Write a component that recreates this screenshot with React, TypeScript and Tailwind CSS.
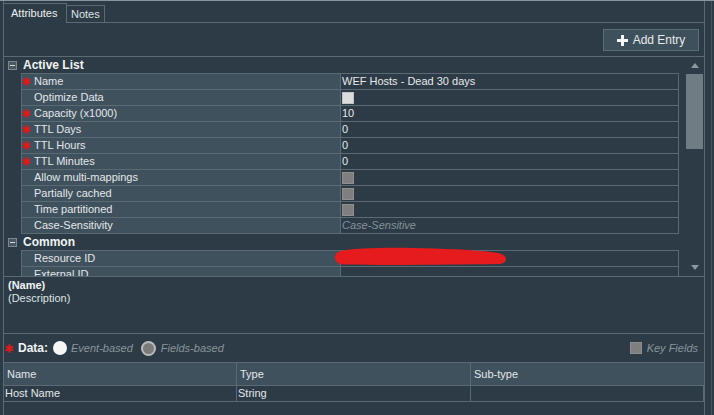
import React from 'react'

// Attribute editor panel: tabs, toolbar, property grid, description, data fields table

type Row = {
  label: string
  req?: boolean
  kind: 'text' | 'check-on' | 'check-off' | 'hint' | 'redacted' | 'empty'
  value?: string
}

const ACTIVE_LIST: Row[] = [
  { label: 'Name', req: true, kind: 'text', value: 'WEF Hosts - Dead 30 days' },
  { label: 'Optimize Data', kind: 'check-on' },
  { label: 'Capacity (x1000)', req: true, kind: 'text', value: '10' },
  { label: 'TTL Days', req: true, kind: 'text', value: '0' },
  { label: 'TTL Hours', req: true, kind: 'text', value: '0' },
  { label: 'TTL Minutes', req: true, kind: 'text', value: '0' },
  { label: 'Allow multi-mappings', kind: 'check-off' },
  { label: 'Partially cached', kind: 'check-off' },
  { label: 'Time partitioned', kind: 'check-off' },
  { label: 'Case-Sensitivity', kind: 'hint', value: 'Case-Sensitive' },
]

const COMMON: Row[] = [
  { label: 'Resource ID', kind: 'redacted' },
  { label: 'External ID', kind: 'empty' },
]

function Asterisk() {
  return (
    <svg width="9" height="9" viewBox="0 0 10 10" className="shrink-0">
      <g stroke="#e3191c" strokeWidth="2.3">
        <line x1="5" y1="0.3" x2="5" y2="9.7" />
        <line x1="0.9" y1="2.65" x2="9.1" y2="7.35" />
        <line x1="0.9" y1="7.35" x2="9.1" y2="2.65" />
      </g>
    </svg>
  )
}

function MinusBox() {
  return (
    <div className="w-[9px] h-[9px] border border-[#7d888e] bg-[#4a5961] flex items-center justify-center shrink-0">
      <div className="w-[5px] h-[1px] bg-[#d6dadd]" />
    </div>
  )
}

function Redaction() {
  return (
    <svg
      width="171"
      height="19"
      viewBox="0 0 171 19"
      className="absolute left-[-6px] top-[-4px] pointer-events-none"
    >
      <path
        d="M6 4 C20 0.5 60 0 100 1.5 C130 2.5 150 4 163 6 C168 7 171 9 171 12 C171 15.5 168 17 163 17 C120 17.5 60 18.5 8 17.5 C3 17.3 0 14 0 10.5 C0 7.5 2 5 6 4 Z"
        fill="#e51b1d"
      />
    </svg>
  )
}

function Value({ row }: { row: Row }) {
  switch (row.kind) {
    case 'text':
      return <span className="pl-[1px] text-[#e6e9eb]">{row.value}</span>
    case 'check-on':
      return <div className="ml-[1px] w-[12px] h-[12px] bg-[#dcdcdc] border border-[#bfc3c5]" />
    case 'check-off':
      return <div className="ml-[1px] w-[12px] h-[12px] bg-[#7f7f7f] border border-[#8f8f8f]" />
    case 'hint':
      return <span className="pl-[1px] italic text-[#86929a]">{row.value}</span>
    case 'redacted':
      return <Redaction />
    default:
      return null
  }
}

function Group({ title, rows }: { title: string; rows: Row[] }) {
  return (
    <div>
      <div className="h-[16px] flex items-center">
        <div className="ml-[4px]">
          <MinusBox />
        </div>
        <span className="ml-[6px] font-bold text-[12px] text-[#f1f3f4]">{title}</span>
      </div>
      <div className="ml-[17px] border-t border-l border-r border-[#5a6a73]">
        {rows.map(row => (
          <div key={row.label} className="h-[16px] flex border-b border-[#5a6a73]">
            <div className="w-[319px] shrink-0 bg-[#3f515d] border-r border-[#5a6a73] flex items-center">
              <div className="w-[12px] flex items-center">{row.req && <Asterisk />}</div>
              <span className="text-[#e3e7ea]">{row.label}</span>
            </div>
            <div className="relative flex-1 flex items-center">
              <Value row={row} />
            </div>
          </div>
        ))}
      </div>
    </div>
  )
}

export default function App() {
  return (
    <div
      className="w-[714px] h-[415px] bg-[#2c3b45] border-t border-[#8a959b] flex overflow-hidden text-[11px] leading-none text-[#e3e7ea]"
      style={{ fontFamily: '"Liberation Sans", Arial, sans-serif' }}
    >
      <div className="w-[3px] shrink-0" />

      <div className="w-[702px] shrink-0 border-l border-r border-[#5a6a73] flex flex-col">
        {/* Tabs */}
        <div className="h-[22px] flex items-end">
          <div className="h-[20px] w-[63px] border-t border-r border-[#5a6a73] flex items-center pl-[7px] text-[#eef0f2]">
            Attributes
          </div>
          <div className="h-[18px] w-[38px] border-t border-r border-b border-[#5a6a73] flex items-center pl-[4px] text-[#dfe3e6]">
            Notes
          </div>
          <div className="flex-1 h-full border-b border-[#5a6a73]" />
        </div>

        {/* Toolbar */}
        <div className="h-[34px] border-b border-[#5a6a73] flex justify-end items-start pt-[6px] pr-[5px]">
          <button className="w-[96px] h-[22px] bg-[#3e505c] border border-[#5d6d76] flex items-center justify-center gap-[5px] text-[12px] text-[#e6e9eb]">
            <svg width="11" height="11" viewBox="0 0 11 11">
              <rect x="4" y="0" width="3" height="11" fill="#f4f6f7" />
              <rect x="0" y="4" width="11" height="3" fill="#f4f6f7" />
            </svg>
            Add Entry
          </button>
        </div>

        {/* Property grid */}
        <div className="h-[220px] border-b border-[#5a6a73] flex overflow-hidden">
          <div className="w-[675px] shrink-0 overflow-hidden">
            <Group title="Active List" rows={ACTIVE_LIST} />
            <Group title="Common" rows={COMMON} />
          </div>
          <div className="flex-1 flex flex-col items-center pt-[6px] pb-[6px]">
            <svg width="8" height="5" viewBox="0 0 8 5" className="ml-[6px]">
              <path d="M0 5 L4 0 L8 5 Z" fill="#8e989d" />
            </svg>
            <div className="mt-[6px] ml-[6px] w-[17px] h-[75px] bg-[#6f7c83]" />
            <div className="flex-1" />
            <svg width="8" height="5" viewBox="0 0 8 5" className="ml-[6px]">
              <path d="M0 0 L8 0 L4 5 Z" fill="#8e989d" />
            </svg>
          </div>
        </div>

        {/* Description */}
        <div className="h-[57px] border-b border-[#5a6a73] pl-[4px] pt-[2px] flex flex-col gap-[1px]">
          <span className="font-bold text-[#f1f3f4] leading-[12px]">(Name)</span>
          <span className="text-[#dfe3e6] leading-[12px]">(Description)</span>
        </div>

        {/* Data type */}
        <div className="h-[28px] flex items-center">
          <div className="ml-[1px]">
            <Asterisk />
          </div>
          <span className="ml-[4px] font-bold text-[12px] text-[#f1f3f4]">Data:</span>
          <div className="ml-[5px] w-[14px] h-[14px] rounded-full bg-[#f6f6f6]" />
          <span className="ml-[4px] italic text-[#8a959c]">Event-based</span>
          <div className="ml-[8px] w-[15px] h-[15px] rounded-full bg-[#7b7b7b] border-2 border-[#b9bcbe]" />
          <span className="ml-[5px] italic text-[#8a959c]">Fields-based</span>
          <div className="flex-1" />
          <div className="w-[12px] h-[12px] bg-[#7f7f7f] border border-[#8f8f8f]" />
          <span className="ml-[5px] mr-[6px] italic text-[#8a959c]">Key Fields</span>
        </div>

        {/* Fields table */}
        <div className="h-[24px] flex bg-[#3f515d] border-t border-b border-[#5a6a73]">
          <div className="w-[233px] border-r border-[#5a6a73] flex items-center pl-[3px]">Name</div>
          <div className="w-[234px] border-r border-[#5a6a73] flex items-center pl-[3px]">Type</div>
          <div className="flex-1 flex items-center pl-[3px]">Sub-type</div>
        </div>
        <div className="h-[16px] flex border-b border-[#5a6a73]">
          <div className="w-[233px] border-r border-[#5a6a73] flex items-center pl-[1px]">Host Name</div>
          <div className="w-[234px] border-r border-[#5a6a73] flex items-center pl-[1px]">String</div>
          <div className="flex-1 border-r border-[#5a6a73]" />
        </div>
      </div>

      <div className="flex-1 flex justify-end pr-[2px]">
        <div className="w-[1px] h-full bg-[#44535c]" />
      </div>
    </div>
  )
}
